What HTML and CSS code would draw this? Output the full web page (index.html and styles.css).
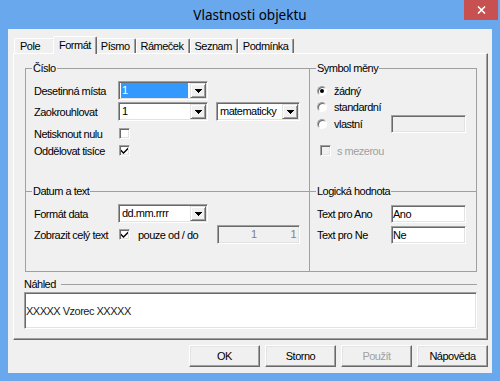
FILE: index.html
```html
<!DOCTYPE html>
<html lang="cs">
<head>
    <meta charset="UTF-8">
    <meta name="viewport" content="width=device-width, initial-scale=1.0">
    <title>Vlastnosti objektu</title>
    <link rel="stylesheet" href="styles.css">
</head>
<body>
    <div class="window">
        <div class="titlebar">
            <div class="title">Vlastnosti objektu</div>
            <div class="close-btn">
                <svg width="9" height="8" viewBox="0 0 9 8"><path d="M1 0.5l7 7M8 0.5l-7 7" stroke="#fff" stroke-width="1.6" fill="none"/></svg>
            </div>
        </div>

        <div class="client">
            <!-- Tabs -->
            <div class="tabs">
                <div class="tab">Pole</div>
                <div class="tab active">Formát</div>
                <div class="tab">Písmo</div>
                <div class="tab">Rámeček</div>
                <div class="tab">Seznam</div>
                <div class="tab">Podmínka</div>
            </div>

            <div class="panel">
                <div class="groups">
                    <!-- Číslo -->
                    <div class="group">
                        <span class="group-title">Číslo</span>
                        <div class="number-body">
                            <div class="row">
                                <span class="label">Desetinná místa</span>
                                <div class="field combo">
                                    <span class="combo-text selected">1</span>
                                    <span class="combo-btn"><svg width="7" height="4" viewBox="0 0 7 4"><path d="M0 0h7v1H0zM1 1h5v1H1zM2 2h3v1H2zM3 3h1v1H3z"/></svg></span>
                                </div>
                            </div>
                            <div class="row">
                                <span class="label">Zaokrouhlovat</span>
                                <div class="field combo">
                                    <span class="combo-text">1</span>
                                    <span class="combo-btn"><svg width="7" height="4" viewBox="0 0 7 4"><path d="M0 0h7v1H0zM1 1h5v1H1zM2 2h3v1H2zM3 3h1v1H3z"/></svg></span>
                                </div>
                                <div class="field combo combo-round">
                                    <span class="combo-text">matematicky</span>
                                    <span class="combo-btn"><svg width="7" height="4" viewBox="0 0 7 4"><path d="M0 0h7v1H0zM1 1h5v1H1zM2 2h3v1H2zM3 3h1v1H3z"/></svg></span>
                                </div>
                            </div>
                            <div class="row check-row spaced">
                                <span class="label">Netisknout nulu</span>
                                <span class="field check"></span>
                            </div>
                            <div class="row check-row">
                                <span class="label">Oddělovat tisíce</span>
                                <span class="field check"><svg width="7" height="7" viewBox="0 0 7 7"><path d="M0 2.5L2.5 5L7 0.5V2.5L2.5 7L0 4.5z"/></svg></span>
                            </div>
                        </div>
                    </div>

                    <!-- Symbol měny -->
                    <div class="group group-right">
                        <span class="group-title">Symbol měny</span>
                        <div class="currency-body">
                            <div class="row radio-row">
                                <span class="radio on"></span>
                                <span class="radio-label">žádný</span>
                            </div>
                            <div class="row radio-row">
                                <span class="radio"></span>
                                <span class="radio-label">standardní</span>
                            </div>
                            <div class="row radio-row wide">
                                <span class="radio"></span>
                                <span class="radio-label">vlastní</span>
                                <span class="field edit disabled"></span>
                            </div>
                            <div class="row check-row mezera">
                                <span class="field check disabled"></span>
                                <span class="check-label muted">s mezerou</span>
                            </div>
                        </div>
                    </div>

                    <!-- Datum a text -->
                    <div class="group group-bottom">
                        <span class="group-title">Datum a text</span>
                        <div class="date-body">
                            <div class="row">
                                <span class="label">Formát data</span>
                                <div class="field combo">
                                    <span class="combo-text">dd.mm.rrrr</span>
                                    <span class="combo-btn"><svg width="7" height="4" viewBox="0 0 7 4"><path d="M0 0h7v1H0zM1 1h5v1H1zM2 2h3v1H2zM3 3h1v1H3z"/></svg></span>
                                </div>
                            </div>
                            <div class="row">
                                <span class="label">Zobrazit celý text</span>
                                <span class="field check"><svg width="7" height="7" viewBox="0 0 7 7"><path d="M0 2.5L2.5 5L7 0.5V2.5L2.5 7L0 4.5z"/></svg></span>
                                <span class="check-label range-label">pouze od / do</span>
                                <div class="field range disabled">
                                    <span>1</span>
                                    <span>1</span>
                                </div>
                            </div>
                        </div>
                    </div>

                    <!-- Logická hodnota -->
                    <div class="group group-right group-bottom">
                        <span class="group-title">Logická hodnota</span>
                        <div class="bool-body">
                            <div class="row">
                                <span>Text pro Ano</span>
                                <span class="field edit">Ano</span>
                            </div>
                            <div class="row">
                                <span>Text pro Ne</span>
                                <span class="field edit">Ne</span>
                            </div>
                        </div>
                    </div>
                </div>

                <!-- Náhled -->
                <div class="preview-group">
                    <div class="preview-head">
                        <span>Náhled</span>
                        <span class="rule"></span>
                    </div>
                    <div class="field preview-box">XXXXX Vzorec XXXXX</div>
                </div>
            </div>

            <div class="buttons">
                <button class="btn">OK</button>
                <button class="btn">Storno</button>
                <button class="btn" disabled>Použít</button>
                <button class="btn">Nápověda</button>
            </div>
        </div>
    </div>
</body>
</html>
```

FILE: styles.css
```css
* {
    box-sizing: border-box;
}

body {
    margin: 0;
    font-family: "Liberation Sans", Arial, sans-serif;
    font-size: 11px;
    letter-spacing: -0.5px;
    color: #000;
    background: #6aa8ee;
}

.window {
    width: 500px;
    height: 381px;
    background: #6aa8ee;
}

/* Title bar */
.titlebar {
    display: flex;
    align-items: flex-start;
    height: 29px;
}

.title {
    flex: 1;
    padding: 6px 0 0 36px;
    text-align: center;
    font-family: "Noto Sans", "Liberation Sans", sans-serif;
    font-size: 13.5px;
    line-height: 18px;
    letter-spacing: 0;
}

.close-btn {
    width: 34px;
    height: 20px;
    margin-right: 2px;
    background: #c75050;
    display: flex;
    align-items: center;
    justify-content: center;
}

.client {
    margin: 0 8px 8px;
    height: 344px;
    padding: 7px 4px 0 5px;
    background: #f0f0f0;
}

/* Tabs */
.tabs {
    display: flex;
    align-items: flex-end;
    height: 17px;
    padding-left: 1px;
}

.tab {
    height: 15px;
    padding: 1px 5px 0 4px;
    line-height: 13px;
    border: 1px solid;
    border-bottom: none;
    border-color: #fff #696969 transparent #fff;
    border-radius: 2px 2px 0 0;
    box-shadow: inset -1px 0 #a0a0a0;
}

.tab:first-child {
    min-width: 41px;
    padding-left: 5px;
}

.tab.active {
    position: relative;
    z-index: 1;
    height: 18px;
    margin: 0 -1px -1px -2px;
    padding: 2px 5px 0;
    background: #f0f0f0;
}

.panel {
    height: 287px;
    padding: 14px 10px 0 11px;
    border: 1px solid;
    border-color: #fff #696969 #696969 #fff;
    box-shadow: inset -1px -1px #a0a0a0;
}

/* Group boxes */
.groups {
    display: grid;
    grid-template-columns: 284px 168px;
    grid-template-rows: 123px 81px;
}

.group {
    border-top: 1px solid #a0a0a0;
    border-left: 1px solid #a0a0a0;
}

.group-right {
    border-right: 1px solid #a0a0a0;
}

.group-bottom {
    border-bottom: 1px solid #a0a0a0;
}

.group-title {
    display: block;
    width: max-content;
    height: 13px;
    margin: -7px 0 0 6px;
    padding: 0 1px;
    line-height: 13px;
    background: #f0f0f0;
}

.number-body {
    padding: 6px 0 0 8px;
}

.currency-body {
    padding: 8px 10px 0 7px;
}

.date-body {
    padding: 6px 9px 0 8px;
}

.bool-body {
    padding: 6px 10px 0 7px;
}

.row {
    display: flex;
    align-items: center;
    height: 19px;
}

.row + .row {
    margin-top: 2px;
}

.label {
    width: 84px;
    flex-shrink: 0;
    white-space: nowrap;
}

.row.check-row {
    height: 13px;
    margin-top: 4px;
}

.row.check-row.spaced {
    margin-top: 6px;
}

.row.radio-row {
    height: 16px;
    margin-top: 0;
}

.row.radio-row.wide {
    height: 18px;
}

.row.check-row.mezera {
    margin-top: 11px;
}

/* Sunken fields */
.field {
    border: 1px solid;
    border-color: #a0a0a0 #fff #fff #a0a0a0;
    box-shadow: inset 1px 1px #696969, inset -1px -1px #e3e3e3;
    background: #fff;
}

.field.disabled {
    background: #f0f0f0;
}

.combo {
    display: flex;
    width: 90px;
    height: 19px;
    padding: 1px;
}

.combo-round {
    width: 84px;
    margin-left: 8px;
}

.combo-text {
    flex: 1;
    margin-right: 2px;
    padding-left: 2px;
    line-height: 15px;
    white-space: nowrap;
    overflow: hidden;
}

.combo-text.selected {
    margin-left: 1px;
    padding-left: 1px;
    background: #3399ff;
    color: #fff;
}

.combo-btn {
    width: 16px;
    display: flex;
    align-items: center;
    justify-content: center;
    background: #f0f0f0;
    border: 1px solid;
    border-color: #e3e3e3 #696969 #696969 #e3e3e3;
    box-shadow: inset 1px 1px #fff, inset -1px -1px #a0a0a0;
}

.check {
    width: 11px;
    height: 11px;
    margin-left: 1px;
    display: flex;
    align-items: center;
    justify-content: center;
    flex-shrink: 0;
}

.mezera .check {
    margin-left: 3px;
}

.check-label {
    margin-left: 6px;
}

.range-label {
    margin-left: 8px;
}

.muted {
    color: #a0a0a0;
}

.radio {
    width: 10px;
    height: 10px;
    border-radius: 50%;
    border: 1px solid;
    border-color: #a0a0a0 #fff #fff #a0a0a0;
    box-shadow: inset 1px 1px #696969;
    background: #fff;
    display: flex;
    align-items: center;
    justify-content: center;
    flex-shrink: 0;
}

.radio.on::after {
    content: "";
    width: 4px;
    height: 4px;
    border-radius: 50%;
    background: #000;
}

.radio-label {
    margin-left: 7px;
}

.edit {
    width: 75px;
    height: 18px;
    margin-left: auto;
    padding-left: 1px;
    line-height: 14px;
    display: flex;
    align-items: center;
}

.range {
    display: flex;
    width: 83px;
    height: 19px;
    margin-left: auto;
    padding: 1px;
    color: #808080;
}

.range span {
    flex: 1;
    padding-right: 2px;
    line-height: 15px;
    text-align: right;
}

/* Preview */
.preview-group {
    margin: 6px 0 0 -1px;
}

.preview-head {
    display: flex;
    align-items: center;
    height: 13px;
    line-height: 13px;
}

.preview-head .rule {
    flex: 1;
    margin-left: 5px;
    border-top: 1px solid #a0a0a0;
}

.preview-box {
    height: 37px;
    margin-top: 1px;
    padding-left: 1px;
    display: flex;
    align-items: center;
    color: #202020;
}

/* Buttons */
.buttons {
    display: flex;
    justify-content: flex-end;
    gap: 5px;
    margin-top: 5px;
}

.btn {
    width: 71px;
    height: 22px;
    padding: 0;
    font: inherit;
    letter-spacing: inherit;
    color: #000;
    background: #f0f0f0;
    border: 1px solid;
    border-color: #fff #696969 #696969 #fff;
    box-shadow: inset -1px -1px #a0a0a0, inset 1px 1px #e3e3e3;
}

.btn:disabled {
    color: #a0a0a0;
}
```
